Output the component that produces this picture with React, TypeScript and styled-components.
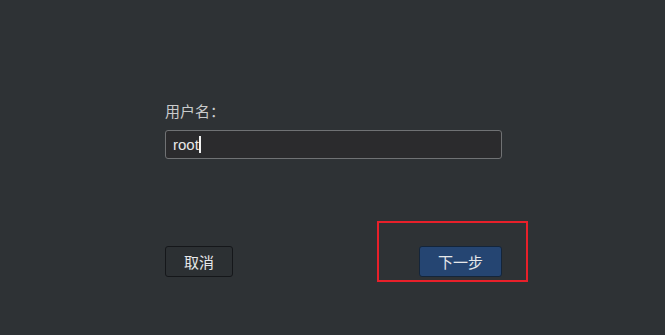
import React from 'react';
import styled, { createGlobalStyle } from 'styled-components';

const GlobalStyle = createGlobalStyle`
  html, body { margin: 0; padding: 0; }
  body {
    background: #2e3235;
    font-family: "Noto Sans CJK SC", "Noto Sans", "Liberation Sans", sans-serif;
  }
`;

const Page = styled.div`
  width: 665px; height: 335px; box-sizing: border-box;
  padding: 100px 0 0 165px;
  background: #2e3235;
`;

const Form = styled.div`
  width: 337px; display: flex; flex-direction: column;
`;

const Label = styled.div`
  font-size: 15px; line-height: 22px; color: #c9cbcc; margin-bottom: 8px;
`;

const InputBox = styled.div`
  height: 29px; box-sizing: border-box; display: flex; align-items: center;
  padding: 0 7px; background: #2b2b2d; border: 1px solid #707274; border-radius: 3px;
  font-family: "Liberation Sans", "Noto Sans", sans-serif; font-size: 15px; color: #e8e8e8;
`;

const Caret = styled.span`
  display: inline-block; width: 2px; height: 17px; background: #f2f2f2;
`;

const Actions = styled.div`
  margin-top: 87px; display: flex; justify-content: space-between; align-items: center;
  position: relative;
`;

const Button = styled.button<{ $primary?: boolean }>`
  height: 31px; box-sizing: border-box; padding: 0;
  width: ${({ $primary }) => ($primary ? '83px' : '68px')};
  background: ${({ $primary }) => ($primary ? '#254572' : '#2c3033')};
  border: 1px solid ${({ $primary }) => ($primary ? '#14253a' : '#15171a')};
  border-radius: 3px; color: #e6e8ea; font-size: 15px;
  font-family: "Noto Sans CJK SC", "Noto Sans", sans-serif;
`;

const Highlight = styled.div`
  position: absolute; left: 212px; top: -25px; width: 151px; height: 61px;
  box-sizing: border-box; border: 2px solid #e8202a; pointer-events: none;
`;

export default function App() {
  return (
    <Page>
      <GlobalStyle />
      <Form>
        <Label>用户名：</Label>
        <InputBox>root<Caret /></InputBox>
        <Actions>
          <Button>取消</Button>
          <Button $primary>下一步</Button>
          <Highlight />
        </Actions>
      </Form>
    </Page>
  );
}
